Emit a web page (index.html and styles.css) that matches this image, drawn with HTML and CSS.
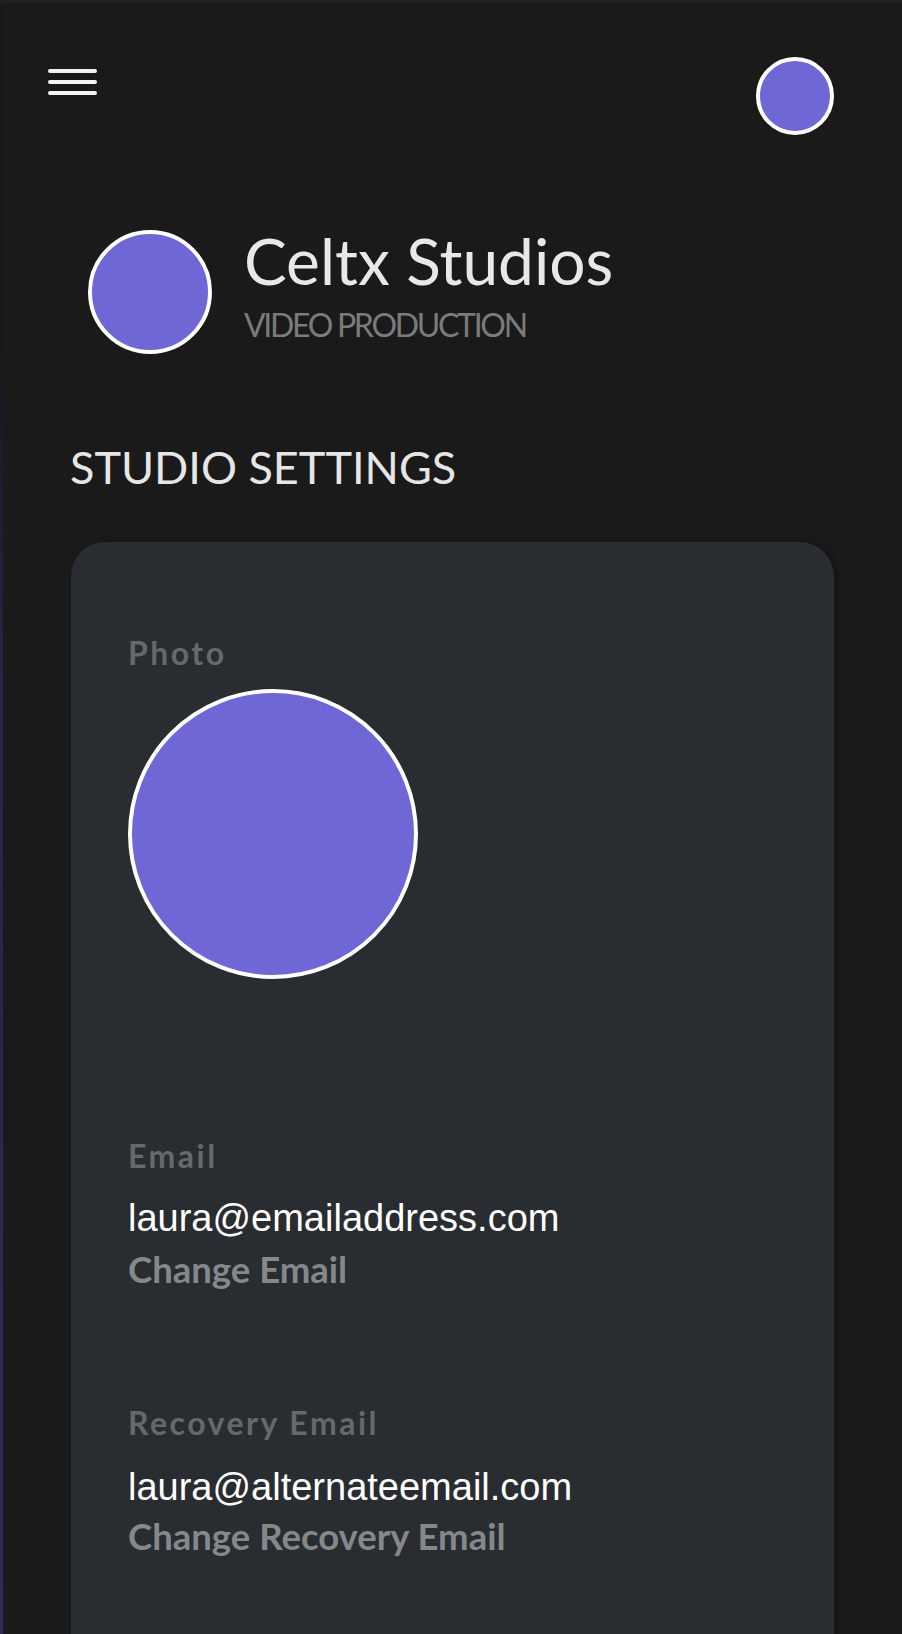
FILE: index.html
```html
<!DOCTYPE html>
<html lang="en">

<head>
    <meta charset="UTF-8">
    <meta name="viewport" content="width=device-width, initial-scale=1.0">
    <title>Studio Settings</title>
    <link rel="stylesheet" href="styles.css">
</head>

<body>
    <div class="app">
        <header class="topbar">
            <button class="menu" aria-label="Menu">
                <span></span>
                <span></span>
                <span></span>
            </button>
            <div class="avatar avatar-small"></div>
        </header>

        <div class="brand">
            <div class="avatar avatar-logo"></div>
            <div class="brand-text">
                <h1>Celtx Studios</h1>
                <p>VIDEO PRODUCTION</p>
            </div>
        </div>

        <h2 class="section-title">STUDIO SETTINGS</h2>

        <div class="card">
            <div class="field">
                <div class="label">Photo</div>
                <div class="avatar avatar-photo"></div>
            </div>

            <div class="field field-email">
                <div class="label">Email</div>
                <div class="value">laura@emailaddress.com</div>
                <a class="change" href="#">Change Email</a>
            </div>

            <div class="field field-recovery">
                <div class="label">Recovery Email</div>
                <div class="value">laura@alternateemail.com</div>
                <a class="change" href="#">Change Recovery Email</a>
            </div>
        </div>
    </div>
</body>

</html>
```

FILE: styles.css
```css
* {
    box-sizing: border-box;
    padding: 0;
    margin: 0;
}

html {
    background-color: #202020;
}

body {
    background-color: #1a1a1a;
    font-family: Lato, "Open Sans", sans-serif;
    margin-top: 3px;
    border-top: 3px solid #3c3c3c;
    border-left: 3px solid;
    border-image: linear-gradient(#16181c, #17181d 20%, #28244a 40%, #2f2b60) 1;
    border-image-slice: 0 0 0 1;
    min-height: 1628px;
    overflow: hidden;
}

.app {
    margin-left: -3px;
}

/* top bar */
.topbar {
    display: flex;
    justify-content: space-between;
    align-items: flex-start;
    padding: 0 68px 0 48px;
}

.menu {
    background: none;
    border: none;
    cursor: pointer;
    margin-top: 63px;
    width: 49px;
    display: flex;
    flex-direction: column;
    gap: 7px;
}

.menu span {
    display: block;
    height: 4px;
    background-color: #f4f4f4;
    border-radius: 2px;
}

.avatar {
    border-radius: 50%;
    background-color: #6f67d5;
    border: 4px solid #ffffff;
    flex-shrink: 0;
}

.avatar-small {
    width: 78px;
    height: 78px;
    margin-top: 51px;
}

/* studio brand */
.brand {
    display: flex;
    align-items: flex-start;
    gap: 32px;
    padding-left: 88px;
    margin-top: 95px;
}

.avatar-logo {
    width: 124px;
    height: 124px;
}

.brand-text h1 {
    font-weight: 400;
    font-size: 64px;
    line-height: 1;
    color: #e8e8e8;
    margin-top: -1px;
}

.brand-text p {
    font-size: 32px;
    line-height: 1;
    color: #7b7b7b;
    letter-spacing: -2.3px;
    margin-top: 16px;
}

.section-title {
    font-weight: 400;
    font-size: 45px;
    line-height: 1;
    color: #e6e6e6;
    margin: 91px 0 0 70px;
}

/* settings card */
.card {
    background-color: #292c30;
    margin: 52px 0 0 71px;
    width: 763px;
    border-radius: 34px;
    padding: 95px 57px 140px;
    box-shadow: 3px 0 4px rgba(10, 14, 20, 0.5);
}

.label {
    font-weight: 700;
    font-size: 32px;
    line-height: 1;
    letter-spacing: 2.5px;
    color: #66696c;
}

.avatar-photo {
    width: 290px;
    height: 290px;
    margin-top: 20px;
}

.field-email {
    margin-top: 161px;
}

.field-recovery {
    margin-top: 119px;
}

.value {
    font-family: "Liberation Sans", Arial, sans-serif;
    font-size: 38px;
    line-height: 1;
    color: #ffffff;
    margin-top: 27px;
}

.change {
    display: block;
    font-weight: 700;
    font-size: 36.5px;
    line-height: 1;
    color: #85888b;
    text-decoration: none;
    margin-top: 14px;
}

.field-recovery .value {
    margin-top: 29px;
}

.field-recovery .change {
    margin-top: 12px;
}
```
